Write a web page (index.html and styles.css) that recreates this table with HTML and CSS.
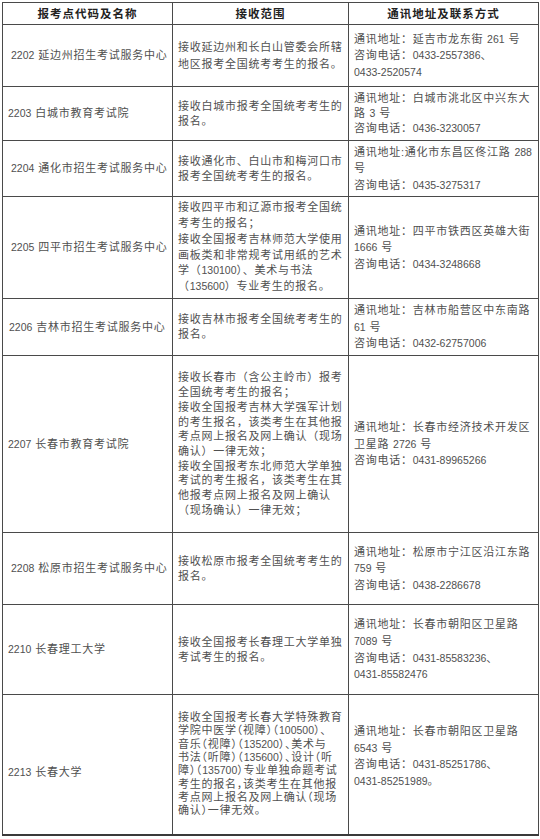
FILE: index.html
```html
<!DOCTYPE html>
<html lang="zh-CN">
<head>
<meta charset="utf-8">
<title>报考点</title>
<link rel="stylesheet" href="styles.css">
</head>
<body>
<table class="grid">
  <colgroup>
    <col class="c1"><col class="c2"><col class="c3">
  </colgroup>
  <thead>
    <tr class="r-head">
      <th>报考点代码及名称</th>
      <th>接收范围</th>
      <th>通讯地址及联系方式</th>
    </tr>
  </thead>
  <tbody>
    <tr class="r2202">
      <td class="name long"><span class="n">2202</span> 延边州招生考试服务中心</td>
      <td class="scope l17">接收延边州和长白山管委会所辖<br>地区报考全国统考考生的报名。</td>
      <td class="addr">通讯地址：延吉市龙东街 <span class="n">261</span> 号<br>咨询电话：<span class="n">0433-2557386</span>、<br><span class="n">0433-2520574</span></td>
    </tr>
    <tr class="r2203">
      <td class="name"><span class="n">2203</span> 白城市教育考试院</td>
      <td class="scope">接收白城市报考全国统考考生的<br>报名。</td>
      <td class="addr l15">通讯地址：白城市洮北区中兴东大<br>路 <span class="n">3</span> 号<br>咨询电话：<span class="n">0436-3230057</span></td>
    </tr>
    <tr class="r2204">
      <td class="name long"><span class="n">2204</span> 通化市招生考试服务中心</td>
      <td class="scope">接收通化市、白山市和梅河口市<br>报考全国统考考生的报名。</td>
      <td class="addr">通讯地址:通化市东昌区佟江路 <span class="n">288</span><br>号<br>咨询电话：<span class="n">0435-3275317</span></td>
    </tr>
    <tr class="r2205">
      <td class="name long"><span class="n">2205</span> 四平市招生考试服务中心</td>
      <td class="scope l16">接收四平市和辽源市报考全国统<br>考考生的报名；<br>接收全国报考吉林师范大学使用<br>画板类和非常规考试用纸的艺术<br>学（<span class="n">130100</span>）、美术与书法<br>（<span class="n">135600</span>）专业考生的报名。</td>
      <td class="addr">通讯地址：四平市铁西区英雄大街<br><span class="n">1666</span> 号<br>咨询电话：<span class="n">0434-3248668</span></td>
    </tr>
    <tr class="r2206">
      <td class="name mid"><span class="n">2206</span> 吉林市招生考试服务中心</td>
      <td class="scope">接收吉林市报考全国统考考生的<br>报名。</td>
      <td class="addr">通讯地址：吉林市船营区中东南路<br><span class="n">61</span> 号<br>咨询电话：<span class="n">0432-62757006</span></td>
    </tr>
    <tr class="r2207">
      <td class="name"><span class="n">2207</span> 长春市教育考试院</td>
      <td class="scope l14">接收长春市（含公主岭市）报考<br>全国统考考生的报名；<br>接收全国报考吉林大学强军计划<br>的考生报名，该类考生在其他报<br>考点网上报名及网上确认（现场<br>确认）一律无效；<br>接收全国报考东北师范大学单独<br>考试的考生报名，该类考生在其<br>他报考点网上报名及网上确认<br>（现场确认）一律无效；</td>
      <td class="addr">通讯地址：长春市经济技术开发区<br>卫星路 <span class="n">2726</span> 号<br>咨询电话：<span class="n">0431-89965266</span></td>
    </tr>
    <tr class="r2208">
      <td class="name long"><span class="n">2208</span> 松原市招生考试服务中心</td>
      <td class="scope">接收松原市报考全国统考考生的<br>报名。</td>
      <td class="addr">通讯地址：松原市宁江区沿江东路<br><span class="n">759</span> 号<br>咨询电话：<span class="n">0438-2286678</span></td>
    </tr>
    <tr class="r2210">
      <td class="name"><span class="n">2210</span> 长春理工大学</td>
      <td class="scope">接收全国报考长春理工大学单独<br>考试考生的报名。</td>
      <td class="addr">通讯地址：长春市朝阳区卫星路<br><span class="n">7089</span> 号<br>咨询电话：<span class="n">0431-85583236</span>、<br><span class="n">0431-85582476</span></td>
    </tr>
    <tr class="r2213">
      <td class="name low"><span class="n">2213</span> 长春大学</td>
      <td class="scope l13">接收全国报考长春大学特殊教育<br>学院中医学（视障）（<span class="n">100500</span>）、<br>音乐（视障）（<span class="n">135200</span>）、美术与<br>书法（听障）（<span class="n">135600</span>）、设计（听<br>障）（<span class="n">135700</span>）专业单独命题考试<br>考生的报名，该类考生在其他报<br>考点网上报名及网上确认（现场<br>确认）一律无效。</td>
      <td class="addr up">通讯地址：长春市朝阳区卫星路<br><span class="n">6543</span> 号<br>咨询电话：<span class="n">0431-85251786</span>、<br><span class="n">0431-85251989</span>。</td>
    </tr>
  </tbody>
</table>
</body>
</html>
```

FILE: styles.css
```css
html, body {
  margin: 0;
  padding: 0;
  background: #ffffff;
}

body {
  font-family: "Liberation Sans", "Noto Sans CJK SC", sans-serif;
  color: #505050;
}

.grid {
  margin: 2px 0 0 2px;
  width: 536px;
  table-layout: fixed;
  border-collapse: collapse;
  border: 1px solid #3a3a3a;
  border-bottom-width: 2px;
}

.c1 { width: 170px; }
.c2 { width: 176px; }
.c3 { width: 190px; }

.grid th,
.grid td {
  border: 1px solid #4a4a4a;
  padding: 0;
  vertical-align: middle;
  white-space: nowrap;
  font-size: 11px;
  letter-spacing: 0.75px;
  line-height: 15px;
}

.grid th {
  font-weight: 700;
  color: #222;
  font-size: 11.5px;
  letter-spacing: 1px;
  text-align: center;
  font-family: "Noto Sans CJK SC", sans-serif;
}

.n {
  font-size: 10.5px;
  letter-spacing: 0;
}

.grid .name { padding-left: 5px; }
.grid .name.long { padding-left: 8px; }
.grid .name.mid { padding-left: 6px; }
.grid .name.low { padding-top: 16px; }

.grid .scope { padding-left: 5px; }
.grid .addr { padding-left: 5px; line-height: 16.6px; }
.grid .addr.up { padding-bottom: 16px; }

.grid .l13 {
  line-height: 13.3px;
  font-feature-settings: "halt";
}
.grid .l14 { line-height: 14.7px; }
.grid .l15 { line-height: 15px; }
.grid .l16 { line-height: 15.8px; }
.grid .l17 { line-height: 17px; }

.r-head { height: 22px; }
.r2202 { height: 62px; }
.r2203 { height: 54px; }
.r2204 { height: 56px; }
.r2205 { height: 102px; }
.r2206 { height: 57px; }
.r2207 { height: 177px; }
.r2208 { height: 72px; }
.r2210 { height: 90px; }
.r2213 { height: 140px; }
```
